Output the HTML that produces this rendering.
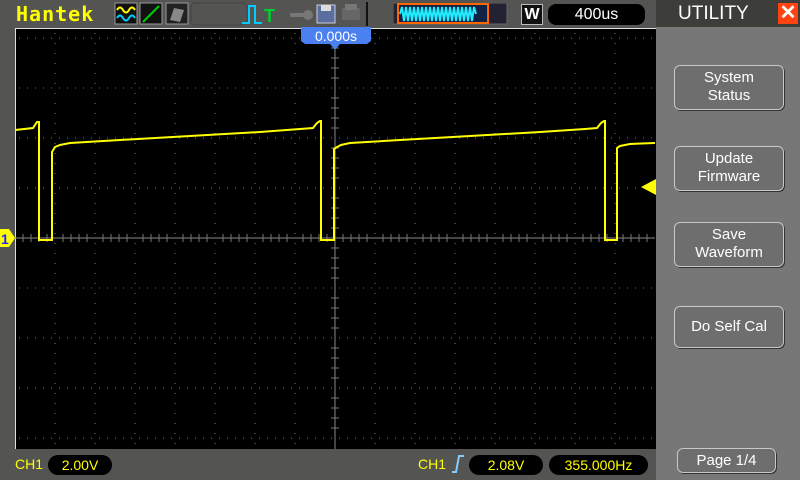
<!DOCTYPE html>
<html><head><style>
body{margin:0;width:800px;height:480px;overflow:hidden;background:#545552;font-family:"Liberation Sans",sans-serif;position:relative}
.abs{position:absolute}
.btn{position:absolute;left:674px;width:108px;border:1px solid #c8c8c8;border-radius:6px;background:#6e6e6e;color:#fff;font-size:15px;text-align:center;line-height:18px;box-shadow:1px 1px 0 #333}
.pill{position:absolute;background:#000;border-radius:10px;color:#ff0;font-size:14px;text-align:center;height:20px;line-height:20px}
</style></head><body>
<div class="abs" style="left:0;top:0;width:656px;height:28px;background:#545552"></div>
<div class="abs" style="left:16px;top:2px;color:#ff0;font-weight:bold;font-size:20px;letter-spacing:1px;font-family:'DejaVu Sans Mono','Liberation Mono',monospace">Hantek</div>
<svg class="abs" style="left:114px;top:2px" width="300" height="24">
<rect x="1" y="1" width="22" height="21" fill="#111" stroke="#999"/>
<path d="M3 8 q3-5 6 0 t6 0 t6 0" stroke="#ff0" stroke-width="2" fill="none"/>
<path d="M3 16 q3-5 6 0 t6 0 t6 0" stroke="#0cf" stroke-width="2" fill="none"/>
<rect x="26" y="1" width="22" height="21" fill="#111" stroke="#999"/>
<path d="M29 20 L45 4" stroke="#0c0" stroke-width="2"/>
<rect x="52" y="1" width="22" height="21" fill="#222" stroke="#999"/>
<path d="M56 18 L60 6 L70 8 L66 20 Z" fill="#888"/>
<rect x="77" y="1" width="56" height="22" rx="4" fill="none" stroke="#444"/>
<path d="M128 21 H135 V4 H141 V21 H148" stroke="#0cf" stroke-width="2" fill="none"/>
<text x="150" y="20" fill="#0c3" font-size="18" font-weight="bold" font-family="Liberation Sans">T</text>
<path d="M176 13 h14" stroke="#777" stroke-width="4"/><circle cx="194" cy="13" r="5" fill="#777"/>
<rect x="203" y="3" width="18" height="18" fill="#5a6ea0" stroke="#ccd"/><rect x="207" y="3" width="10" height="6" fill="#ddd"/>
<rect x="228" y="6" width="18" height="12" fill="#666"/><rect x="231" y="2" width="12" height="6" fill="#777"/>
<path d="M253 0 V24" stroke="#111" stroke-width="2"/>
</svg>
<svg class="abs" style="left:393px;top:3px" width="115" height="22">
<rect x="0" y="0" width="114" height="21" fill="#223" stroke="#666"/>
<rect x="5" y="1" width="90" height="19" fill="#124" stroke="#f60" stroke-width="2"/>
<path d="M7 11 l2-7 l2 14 l2-14 l2 14 l2-14 l2 14 l2-14 l2 14 l2-14 l2 14 l2-14 l2 14 l2-14 l2 14 l2-14 l2 14 l2-14 l2 14 l2-14 l2 14 l2-14 l2 14 l2-14 l2 14 l2-14 l2 14 l2-14 l2 14 l2-14 l2 14 l2-14 l2 14 l2-14 l2 14 l2-14 l2 14 l2-14 l2 7" stroke="#2ef" stroke-width="2" fill="none"/>
</svg>
<div class="abs" style="left:521px;top:4px;width:20px;height:19px;background:#111;border:1px solid #bbb;color:#fff;font-weight:bold;font-size:16px;text-align:center;line-height:19px">W</div>
<div class="abs" style="left:548px;top:4px;width:97px;height:21px;background:#000;border-radius:8px;color:#fff;font-size:16px;text-align:center;line-height:21px">400us</div>
<div class="abs" style="left:656px;top:0;width:144px;height:480px;background:#777"></div>
<div class="abs" style="left:656px;top:0;width:144px;height:27px;background:#3d3d3a;color:#fff;font-size:19px;line-height:28px"><span style="margin-left:22px">UTILITY</span></div>
<div class="abs" style="left:778px;top:3px;width:20px;height:21px;background:#f41;color:#fff;font-size:20px;font-weight:bold;text-align:center;line-height:21px">✕</div>
<div class="abs" style="left:655px;top:28px;width:1px;height:420px;background:#ccc"></div>
<svg class="abs" style="left:0;top:28px" width="656" height="421">
<rect x="15" y="0" width="641" height="421" fill="#000"/>
<path d="M15 0.5 H656 M15.5 0 V421" stroke="#ddd" stroke-width="1"/>
<g fill="#777">
<script></script>
</g>
<g id="grid" stroke="#777" stroke-width="1" stroke-dasharray="1 9" fill="none">
<path d="M55 0V420M95 0V420M135 0V420M175 0V420M215 0V420M255 0V420M295 0V420M375 0V420M415 0V420M455 0V420M495 0V420M535 0V420M575 0V420M615 0V420" stroke-dasharray="1 9" stroke-dashoffset="-5"/>
<path d="M15 10H655M15 60H655M15 110H655M15 160H655M15 260H655M15 310H655M15 360H655M15 410H655" stroke-dasharray="1 7" stroke-dashoffset="-4"/>
</g>
<path d="M335 0V421M15 210H655" stroke="#888" stroke-width="1"/>
<path d="M23 206v8M31 206v8M39 206v8M47 206v8M63 206v8M71 206v8M79 206v8M87 206v8M103 206v8M111 206v8M119 206v8M127 206v8M143 206v8M151 206v8M159 206v8M167 206v8M183 206v8M191 206v8M199 206v8M207 206v8M223 206v8M231 206v8M239 206v8M247 206v8M263 206v8M271 206v8M279 206v8M287 206v8M303 206v8M311 206v8M319 206v8M327 206v8M343 206v8M351 206v8M359 206v8M367 206v8M383 206v8M391 206v8M399 206v8M407 206v8M423 206v8M431 206v8M439 206v8M447 206v8M463 206v8M471 206v8M479 206v8M487 206v8M503 206v8M511 206v8M519 206v8M527 206v8M543 206v8M551 206v8M559 206v8M567 206v8M583 206v8M591 206v8M599 206v8M607 206v8M623 206v8M631 206v8M639 206v8M647 206v8" stroke="#777"/>
<path d="M331 20h8M331 30h8M331 40h8M331 50h8M331 70h8M331 80h8M331 90h8M331 100h8M331 120h8M331 130h8M331 140h8M331 150h8M331 170h8M331 180h8M331 190h8M331 200h8M331 220h8M331 230h8M331 240h8M331 250h8M331 270h8M331 280h8M331 290h8M331 300h8M331 320h8M331 330h8M331 340h8M331 350h8M331 370h8M331 380h8M331 390h8M331 400h8" stroke="#777"/>
<polyline fill="none" stroke="#ff0" stroke-width="2" transform="translate(0,-28)" points="15,130 33,128 37,122 39,122 39,240 52,240 52,152 55,147 60,145 70,143 120,140 190,136 260,132 300,129 313,128 317,123 320,121 321,121 321,240 334,240 334,149 337,147 341,145 350,143 400,140 470,136 540,132 585,129 597,128 601,123 604,121 605,121 605,240 617,240 617,148 620,146 630,144 655,143"/>
</svg>
<svg class="abs" style="left:299px;top:27px" width="74" height="26">
<path d="M2 0 H72 V14 L68 17 H41 L36 23 L31 17 H6 L2 14 Z" fill="#4a80f0"/>
</svg>
<div class="abs" style="left:301px;top:28px;width:70px;color:#fff;font-size:14px;text-align:center;line-height:17px">0.000s</div>
<svg class="abs" style="left:0;top:229px" width="16" height="18"><path d="M0 0H9L15 9L9 18H0Z" fill="#ff0"/><text x="1" y="15" font-size="14" font-weight="bold" fill="#22f" font-family="Liberation Sans">1</text></svg>
<svg class="abs" style="left:641px;top:179px" width="15" height="16"><path d="M15 0V16L0 8Z" fill="#ff0"/></svg>
<div class="btn" style="top:65px;height:40px;padding-top:3px">System<br>Status</div>
<div class="btn" style="top:146px;height:40px;padding-top:3px">Update<br>Firmware</div>
<div class="btn" style="top:222px;height:40px;padding-top:3px">Save<br>Waveform</div>
<div class="btn" style="top:306px;height:40px;line-height:40px">Do Self Cal</div>
<div class="btn" style="top:448px;left:677px;width:97px;height:23px;line-height:23px">Page 1/4</div>
<div class="abs" style="left:15px;top:456px;color:#ff0;font-size:14px">CH1</div>
<div class="pill" style="left:48px;top:455px;width:64px">2.00V</div>
<div class="abs" style="left:418px;top:456px;color:#ff0;font-size:14px">CH1</div>
<svg class="abs" style="left:451px;top:453px" width="14" height="22"><path d="M1 19H5L8 3H13" stroke="#8cf" stroke-width="2" fill="none"/></svg>
<div class="pill" style="left:469px;top:455px;width:74px">2.08V</div>
<div class="pill" style="left:549px;top:455px;width:99px">355.000Hz</div>
</body></html>
